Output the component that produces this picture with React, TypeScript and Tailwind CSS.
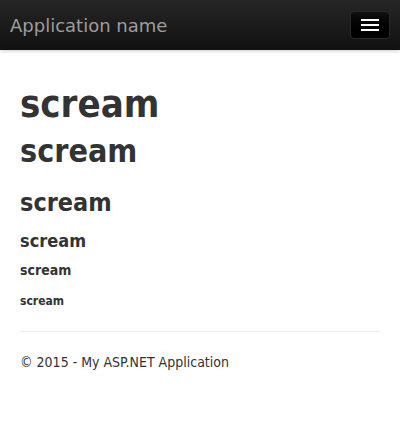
export default function App() {
  return (
    <div className="min-h-[424px] bg-white text-[#333] font-['DejaVu_Sans',sans-serif]">
      <nav className="h-[50px] flex items-center justify-between pl-[10px] pr-[10px] bg-gradient-to-b from-[#262626] to-[#111] shadow-[0_1px_4px_rgba(0,0,0,0.2)]">
        <span className="text-[18px] text-[#9d9d9d]">Application name</span>
        <button className="w-[40px] h-[28px] rounded-[4px] border border-[#2a2a2a] bg-gradient-to-b from-[#111] to-[#000] flex flex-col items-center justify-center gap-[3px]">
          <span className="block w-[18px] h-[2px] bg-white" />
          <span className="block w-[18px] h-[2px] bg-white" />
          <span className="block w-[18px] h-[2px] bg-white" />
        </button>
      </nav>

      <div className="px-[20px] pt-[34px] font-['DejaVu_Sans_Condensed','DejaVu_Sans',sans-serif]">
        <h1 className="text-[38px] font-bold leading-[40px]">scream</h1>
        <h2 className="text-[32px] font-bold leading-[34px] mt-[10px]">scream</h2>
        <h3 className="text-[25px] font-bold leading-[28px] mt-[21px]">scream</h3>
        <h4 className="text-[18px] font-bold leading-[20px] mt-[14px]">scream</h4>
        <h5 className="text-[14px] font-bold leading-[16px] mt-[11px]">scream</h5>
        <h6 className="text-[12px] font-bold leading-[14px] mt-[16px]">scream</h6>

        <hr className="mt-[23px] border-t border-[#eee]" />
        <footer className="mt-[20px] text-[14px]">© 2015 - My ASP.NET Application</footer>
      </div>
    </div>
  );
}
